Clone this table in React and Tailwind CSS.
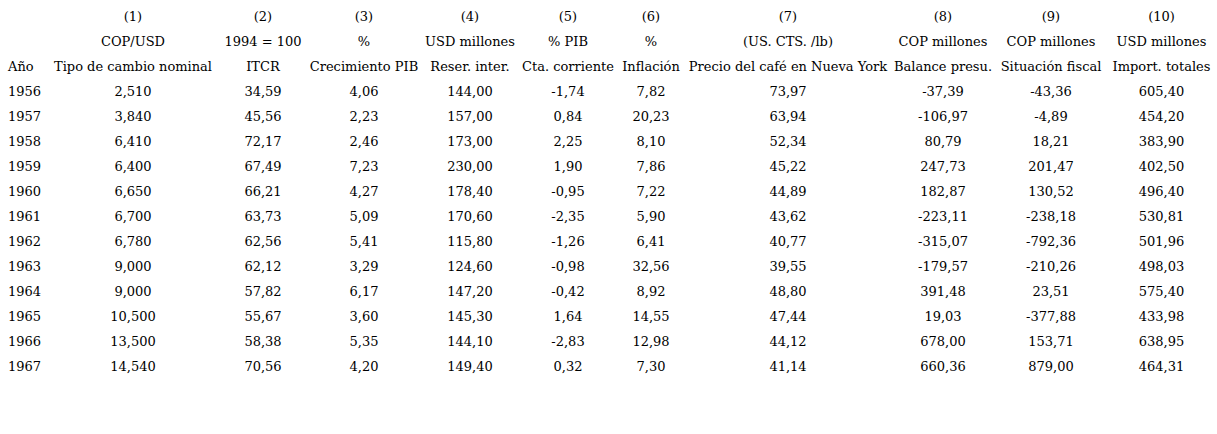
import React from "react";

const head1 = ["", "(1)", "(2)", "(3)", "(4)", "(5)", "(6)", "(7)", "(8)", "(9)", "(10)"];
const head2 = ["", "COP/USD", "1994 = 100", "%", "USD millones", "% PIB", "%", "(US. CTS. /lb)", "COP millones", "COP millones", "USD millones"];
const head3 = ["Año", "Tipo de cambio nominal", "ITCR", "Crecimiento PIB", "Reser. inter.", "Cta. corriente", "Inflación", "Precio del café en Nueva York", "Balance presu.", "Situación fiscal", "Import. totales"];

const rows = [
  ["1956", "2,510", "34,59", "4,06", "144,00", "-1,74", "7,82", "73,97", "-37,39", "-43,36", "605,40"],
  ["1957", "3,840", "45,56", "2,23", "157,00", "0,84", "20,23", "63,94", "-106,97", "-4,89", "454,20"],
  ["1958", "6,410", "72,17", "2,46", "173,00", "2,25", "8,10", "52,34", "80,79", "18,21", "383,90"],
  ["1959", "6,400", "67,49", "7,23", "230,00", "1,90", "7,86", "45,22", "247,73", "201,47", "402,50"],
  ["1960", "6,650", "66,21", "4,27", "178,40", "-0,95", "7,22", "44,89", "182,87", "130,52", "496,40"],
  ["1961", "6,700", "63,73", "5,09", "170,60", "-2,35", "5,90", "43,62", "-223,11", "-238,18", "530,81"],
  ["1962", "6,780", "62,56", "5,41", "115,80", "-1,26", "6,41", "40,77", "-315,07", "-792,36", "501,96"],
  ["1963", "9,000", "62,12", "3,29", "124,60", "-0,98", "32,56", "39,55", "-179,57", "-210,26", "498,03"],
  ["1964", "9,000", "57,82", "6,17", "147,20", "-0,42", "8,92", "48,80", "391,48", "23,51", "575,40"],
  ["1965", "10,500", "55,67", "3,60", "145,30", "1,64", "14,55", "47,44", "19,03", "-377,88", "433,98"],
  ["1966", "13,500", "58,38", "5,35", "144,10", "-2,83", "12,98", "44,12", "678,00", "153,71", "638,95"],
  ["1967", "14,540", "70,56", "4,20", "149,40", "0,32", "7,30", "41,14", "660,36", "879,00", "464,31"],
];

function Row({ cells }) {
  return (
    <tr className="h-[25px]">
      {cells.map((c, i) => (
        <td
          key={i}
          className={i === 0 ? "pl-[8px] text-left whitespace-nowrap p-0" : "text-center whitespace-nowrap p-0"}
        >
          {c}
        </td>
      ))}
    </tr>
  );
}

export default function App() {
  return (
    <div
      className="w-[1217px] h-[434px] bg-white text-black pt-[4px] text-[13px] leading-none"
      style={{ fontFamily: '"DejaVu Serif", serif' }}
    >
      <table className="table-fixed border-collapse w-[1217px]">
        <colgroup>
          <col className="w-[48px]" />
          <col className="w-[170px]" />
          <col className="w-[90px]" />
          <col className="w-[112px]" />
          <col className="w-[100px]" />
          <col className="w-[96px]" />
          <col className="w-[70px]" />
          <col className="w-[204px]" />
          <col className="w-[106px]" />
          <col className="w-[110px]" />
          <col className="w-[111px]" />
        </colgroup>
        <tbody>
          <Row cells={head1} />
          <Row cells={head2} />
          <Row cells={head3} />
          {rows.map((r) => (
            <Row key={r[0]} cells={r} />
          ))}
        </tbody>
      </table>
    </div>
  );
}
